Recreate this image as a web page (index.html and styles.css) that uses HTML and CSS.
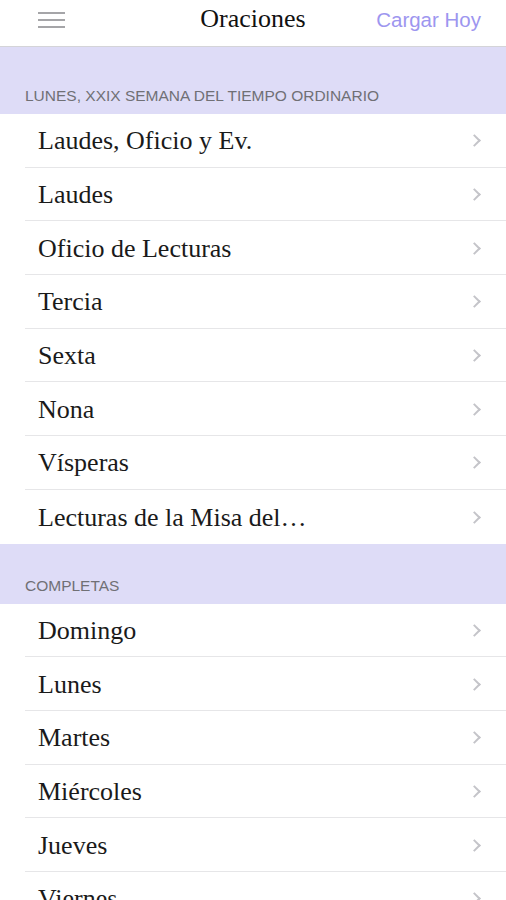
FILE: index.html
```html
<!DOCTYPE html>
<html lang="es">
<head>
    <meta charset="UTF-8">
    <meta name="viewport" content="width=device-width, initial-scale=1.0">
    <title>Oraciones</title>
    <link rel="stylesheet" href="styles.css">
</head>
<body>
    <header class="navbar">
        <div class="menu-btn">
            <span></span>
            <span></span>
            <span></span>
        </div>
        <h1 class="title">Oraciones</h1>
        <a class="today" href="#">Cargar Hoy</a>
    </header>
    <main>
        <div class="section-head first">LUNES, XXIX SEMANA DEL TIEMPO ORDINARIO</div>
        <ul class="list">
            <li class="row"><span>Laudes, Oficio y Ev.</span><i class="chevron"></i></li>
            <li class="row"><span>Laudes</span><i class="chevron"></i></li>
            <li class="row"><span>Oficio de Lecturas</span><i class="chevron"></i></li>
            <li class="row"><span>Tercia</span><i class="chevron"></i></li>
            <li class="row"><span>Sexta</span><i class="chevron"></i></li>
            <li class="row"><span>Nona</span><i class="chevron"></i></li>
            <li class="row"><span>Vísperas</span><i class="chevron"></i></li>
            <li class="row"><span>Lecturas de la Misa del…</span><i class="chevron"></i></li>
        </ul>
        <div class="section-head">COMPLETAS</div>
        <ul class="list">
            <li class="row"><span>Domingo</span><i class="chevron"></i></li>
            <li class="row"><span>Lunes</span><i class="chevron"></i></li>
            <li class="row"><span>Martes</span><i class="chevron"></i></li>
            <li class="row"><span>Miércoles</span><i class="chevron"></i></li>
            <li class="row"><span>Jueves</span><i class="chevron"></i></li>
            <li class="row"><span>Viernes</span><i class="chevron"></i></li>
            <li class="row"><span>Sábado</span><i class="chevron"></i></li>
        </ul>
    </main>
</body>
</html>
```

FILE: styles.css
```css
* {
    margin: 0;
    padding: 0;
    box-sizing: border-box;
}

body {
    background: #ffffff;
    height: 900px;
    overflow: hidden;
    font-family: "Liberation Sans", Arial, sans-serif;
}

.navbar {
    height: 47px;
    display: flex;
    align-items: center;
    justify-content: space-between;
    padding: 0 25px 0 38px;
    border-bottom: 1px solid #d4d4d8;
    position: relative;
}

.menu-btn {
    width: 27px;
    display: flex;
    flex-direction: column;
    gap: 5px;
    margin-top: -6px;
}

.menu-btn span {
    display: block;
    height: 2px;
    background: #a5a5a8;
}

.title {
    position: absolute;
    left: 0;
    right: 0;
    text-align: center;
    font-family: "Liberation Serif", "Times New Roman", serif;
    font-weight: 400;
    font-size: 26px;
    color: #111111;
    pointer-events: none;
    margin-top: -8px;
}

.today {
    font-size: 20.5px;
    color: #9d96ef;
    text-decoration: none;
    margin-top: -7px;
}

.section-head {
    height: 60px;
    background: #dedcf7;
    color: #707075;
    font-size: 15.5px;
    padding: 0 0 9px 25px;
    display: flex;
    align-items: flex-end;
}

.section-head.first {
    height: 67px;
}

.list {
    list-style: none;
}

.row {
    height: 53.7px;
    margin-left: 25px;
    padding: 0 27px 0 13px;
    display: flex;
    align-items: center;
    justify-content: space-between;
    border-bottom: 1px solid #e6e6e8;
    font-family: "Liberation Serif", "Times New Roman", serif;
    font-size: 26px;
    color: #1a1a1a;
}

.row:last-child {
    border-bottom: none;
}

.row span {
    margin-top: 2px;
}

.chevron {
    width: 9px;
    height: 9px;
    border-top: 2px solid #c4c4c9;
    border-right: 2px solid #c4c4c9;
    transform: rotate(45deg);
    margin-top: 1px;
}
```
